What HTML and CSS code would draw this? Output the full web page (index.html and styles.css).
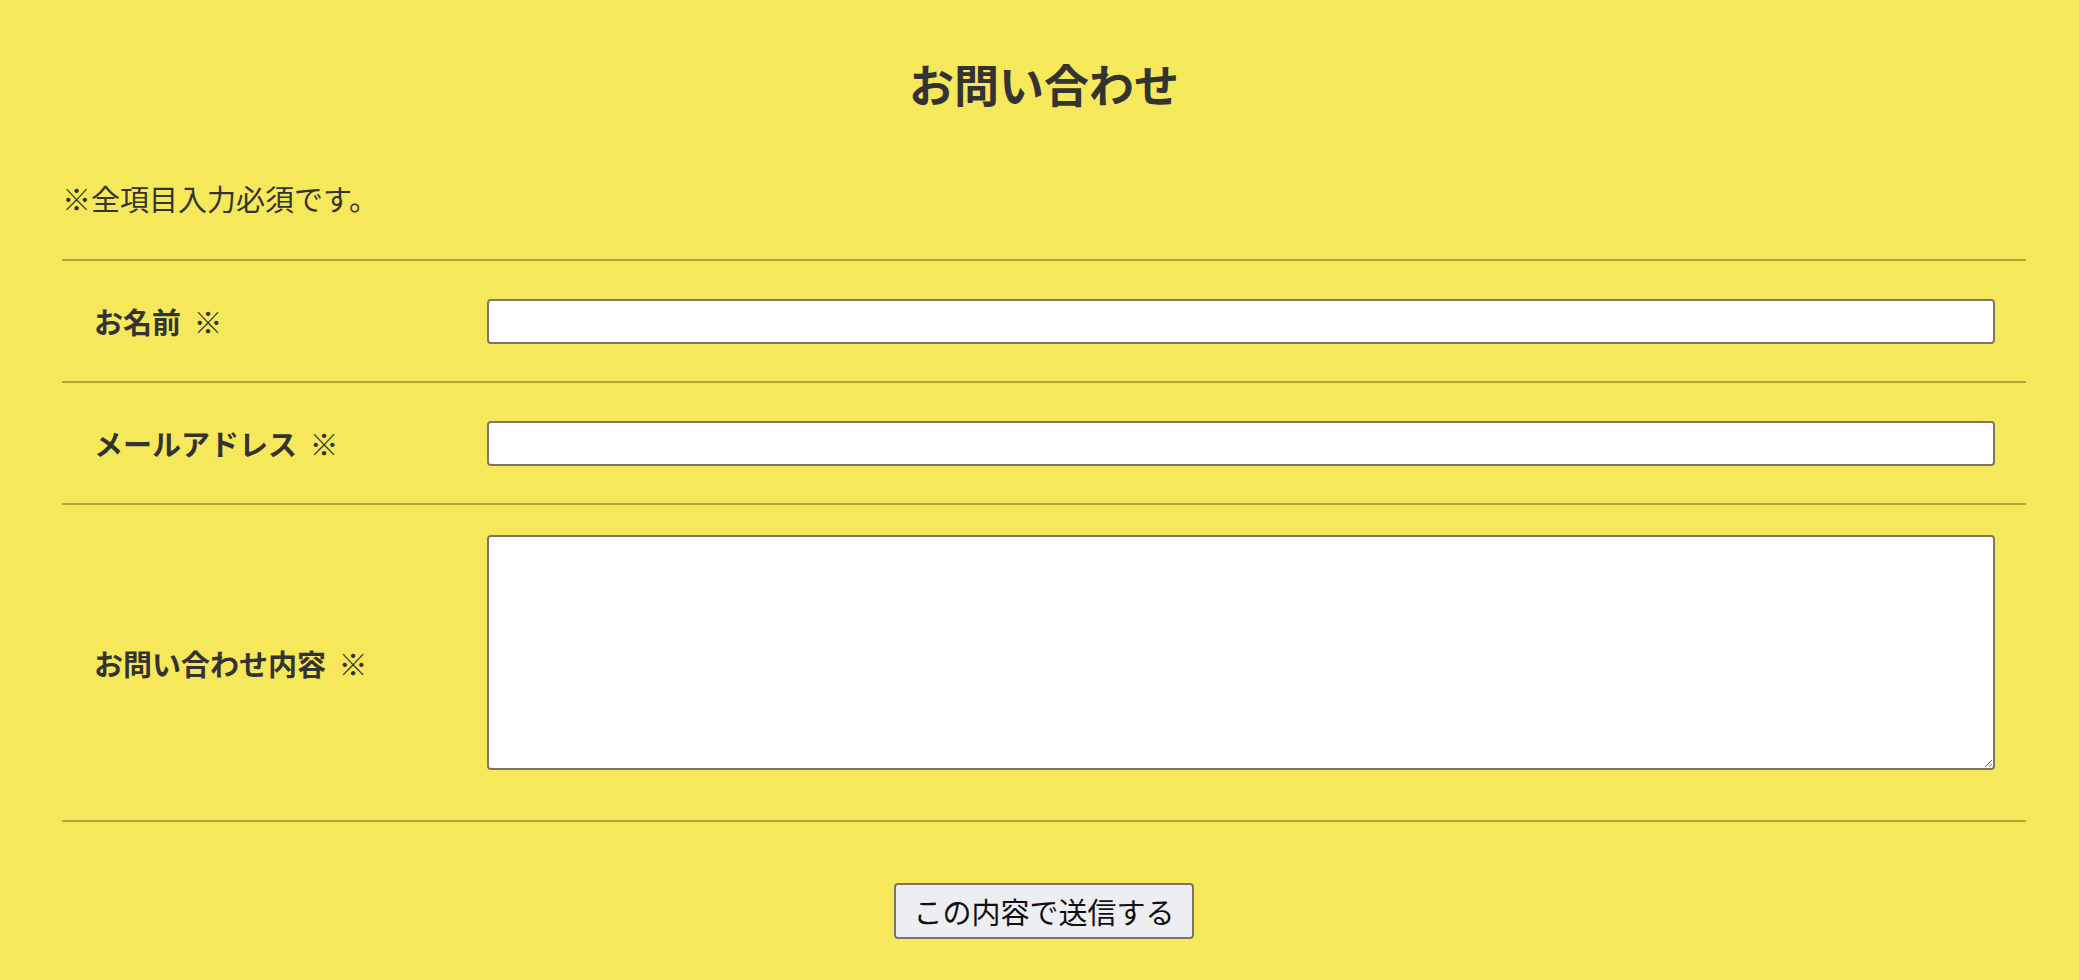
FILE: index.html
```html
<!DOCTYPE html>
<html lang="ja">
<head>
<meta charset="utf-8">
<title>お問い合わせ</title>
<link rel="stylesheet" href="styles.css">
</head>
<body>
<main class="contact">
  <h1 class="contact-title">お問い合わせ</h1>
  <p class="contact-note">※全項目入力必須です。</p>
  <form class="contact-form">
    <div class="form-row">
      <label class="form-label" for="name">お名前 ※</label>
      <div class="form-field">
        <input class="form-input" type="text" id="name">
      </div>
    </div>
    <div class="form-row">
      <label class="form-label" for="email">メールアドレス ※</label>
      <div class="form-field">
        <input class="form-input" type="email" id="email">
      </div>
    </div>
    <div class="form-row form-row-last">
      <label class="form-label" for="message">お問い合わせ内容 ※</label>
      <div class="form-field form-field-area">
        <textarea class="form-textarea" id="message"></textarea>
      </div>
    </div>
    <div class="form-actions">
      <button class="form-submit" type="submit">この内容で送信する</button>
    </div>
  </form>
</main>
</body>
</html>
```

FILE: styles.css
```css
html, body {
  margin: 0;
  padding: 0;
}

body {
  background: #f6e85b;
  color: #333333;
  font-family: "Noto Sans CJK JP", "Noto Sans", sans-serif;
  font-size: 29px;
}

.contact {
  padding: 0 53px 40px 62px;
}

.contact-title {
  margin: 54px 0 0;
  font-size: 45px;
  line-height: 60px;
  font-weight: 700;
  text-align: center;
  color: #333333;
}

.contact-note {
  margin: 64px 0 41px;
  line-height: 40px;
  font-size: 29px;
}

.contact-form {
  margin: 0;
}

.form-row {
  display: grid;
  grid-template-columns: 393px 1fr;
  border-top: 2px solid #b2a43e;
}

.form-row-last {
  border-bottom: 2px solid #b2a43e;
}

.form-label {
  align-self: center;
  padding-left: 32px;
  font-weight: 700;
  font-size: 29px;
  line-height: 40px;
  word-spacing: 0.2em;
  color: #333333;
}

.form-field {
  padding: 38px 31px 37px 32px;
}

.form-field-area {
  padding: 30px 31px 50px 32px;
}

.form-input,
.form-textarea {
  display: block;
  box-sizing: border-box;
  width: 100%;
  margin: 0;
  background: #ffffff;
  border: 2px solid #7b7668;
  border-radius: 4px;
  font-family: "Noto Sans CJK JP", sans-serif;
  font-size: 20px;
}

.form-input {
  height: 45px;
}

.form-textarea {
  height: 235px;
  resize: both;
}

.form-actions {
  display: flex;
  justify-content: center;
  padding-top: 61px;
}

.form-submit {
  box-sizing: border-box;
  width: 300px;
  height: 56px;
  padding: 0;
  background: #eceef1;
  border: 2px solid #7b7668;
  border-radius: 4px;
  color: #111111;
  font-family: "Noto Sans CJK JP", sans-serif;
  font-size: 29px;
  line-height: 40px;
}
```
